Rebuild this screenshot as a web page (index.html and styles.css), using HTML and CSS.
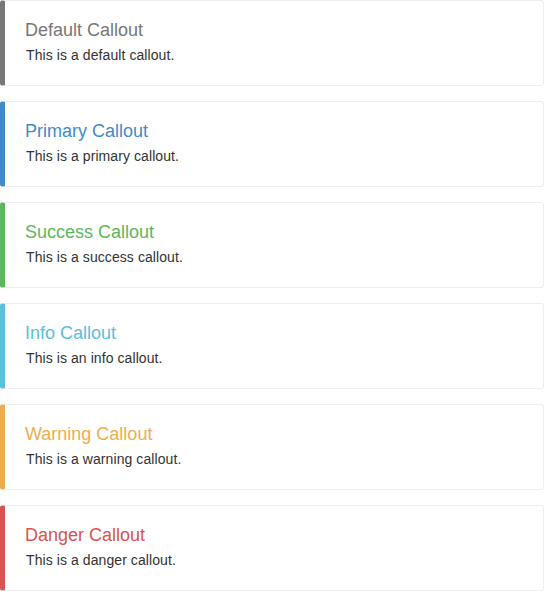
FILE: index.html
```html
<!DOCTYPE html>
<html>
<head>
<meta charset="utf-8">
<link rel="stylesheet" href="styles.css">
</head>
<body>
<div class="list">
  <div class="callout callout-default">
    <h4>Default Callout</h4>
    <p>This is a default callout.</p>
  </div>
  <div class="callout callout-primary">
    <h4>Primary Callout</h4>
    <p>This is a primary callout.</p>
  </div>
  <div class="callout callout-success">
    <h4>Success Callout</h4>
    <p>This is a success callout.</p>
  </div>
  <div class="callout callout-info">
    <h4>Info Callout</h4>
    <p>This is an info callout.</p>
  </div>
  <div class="callout callout-warning">
    <h4>Warning Callout</h4>
    <p>This is a warning callout.</p>
  </div>
  <div class="callout callout-danger">
    <h4>Danger Callout</h4>
    <p>This is a danger callout.</p>
  </div>
</div>
</body>
</html>
```

FILE: styles.css
```css
html, body {
  margin: 0;
  padding: 0;
  background: #fff;
}
body {
  font-family: "Liberation Sans", Arial, Helvetica, sans-serif;
  font-size: 14px;
  line-height: 20px;
  color: #333;
}
.list {
  display: flex;
  flex-direction: column;
  gap: 15px;
}
.callout {
  padding: 20px;
  border: 1px solid #eee;
  border-left-width: 5px;
  border-radius: 3px;
  height: 86px;
  box-sizing: border-box;
}
.callout h4 {
  margin: 0 0 5px;
  font-size: 18px;
  font-weight: 500;
  line-height: 19px;
}
.callout p {
  margin: 0;
  padding-left: 1px;
  letter-spacing: 0.08px;
}
.callout-default { border-left-color: #777; }
.callout-default h4 { color: #777; }
.callout-primary { border-left-color: #428bca; }
.callout-primary h4 { color: #428bca; }
.callout-success { border-left-color: #5cb85c; }
.callout-success h4 { color: #5cb85c; }
.callout-info { border-left-color: #5bc0de; }
.callout-info h4 { color: #5bc0de; }
.callout-warning { border-left-color: #f0ad4e; }
.callout-warning h4 { color: #f0ad4e; }
.callout-danger { border-left-color: #d9534f; }
.callout-danger h4 { color: #d9534f; }
```
